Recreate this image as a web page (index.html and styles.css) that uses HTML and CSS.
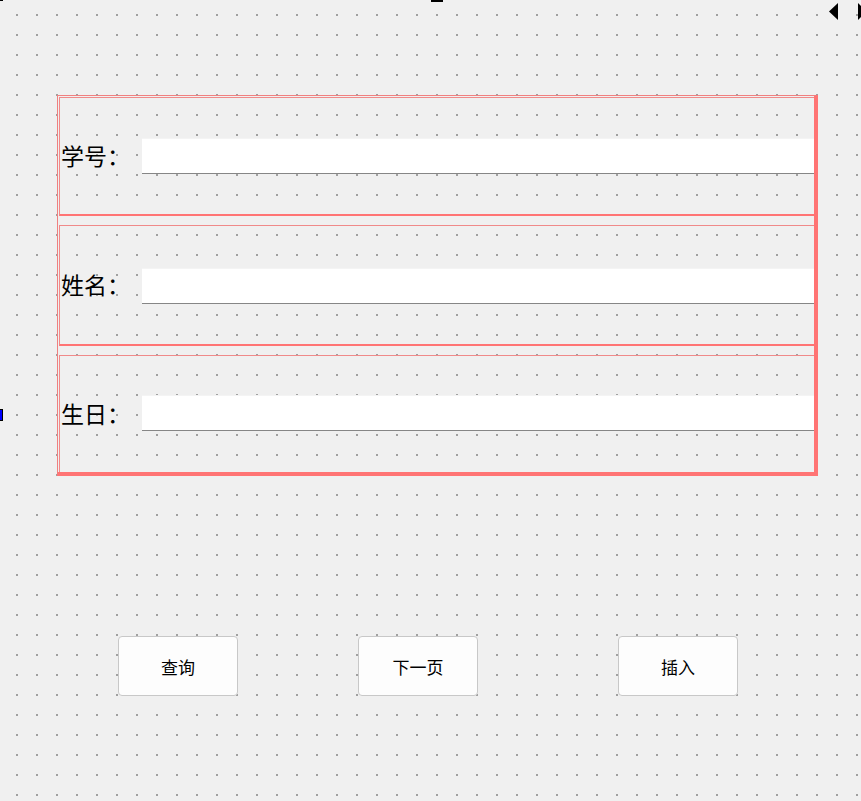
FILE: index.html
```html
<!DOCTYPE html>
<html lang="zh-CN">
<head>
  <meta charset="UTF-8">
  <title>学生信息</title>
  <link rel="stylesheet" href="styles.css">
</head>
<body>
  <div class="handle handle-tl"></div>
  <div class="handle handle-top"></div>
  <div class="handle handle-left"></div>
  <svg class="handle-arrows" width="33" height="22" viewBox="0 0 33 22">
    <polygon points="10,3 10,20 1,11.5" fill="#000"/>
    <polygon points="30,3 30,20 33,17 33,6" fill="#000"/>
  </svg>

  <form class="form-layout">
    <div class="field-row">
      <label class="field-label">学号：</label>
      <input class="field-input" name="sno">
    </div>
    <div class="field-row row-mid">
      <label class="field-label">姓名：</label>
      <input class="field-input" name="sname">
    </div>
    <div class="field-row row-last">
      <label class="field-label">生日：</label>
      <input class="field-input" name="birthday">
    </div>
  </form>

  <div class="button-row">
    <button type="button" class="btn">查询</button>
    <button type="button" class="btn btn-next">下一页</button>
    <button type="button" class="btn btn-insert">插入</button>
  </div>
</body>
</html>
```

FILE: styles.css
```css
html, body { margin: 0; padding: 0; }
body {
  width: 861px;
  height: 801px;
  overflow: hidden;
  position: relative;
  background-color: #f0f0f0;
  background-image: conic-gradient(from 0deg at 2px 2px, transparent 75%, #a0a0a0 0);
  background-size: 20px 20px;
  background-position: 16px 14px;
  font-family: "Noto Sans CJK SC", "Noto Sans", sans-serif;
}

/* designer handles */
.handle { position: absolute; background: #000; }
.handle-tl { left: 0; top: 0; width: 3px; height: 1px; }
.handle-top { left: 431px; top: 0; width: 12px; height: 2px; }
.handle-left {
  left: 0; top: 409px; width: 2px; height: 10px;
  background: #0000ff;
  border: 1px solid #000;
  border-left: none;
}
.handle-arrows { position: absolute; top: 0; left: 828px; }

/* form layout */
.form-layout {
  margin: 95px 0 0 57px;
  width: 761px;
  box-sizing: border-box;
  border-left: 1px solid #f08080;
  border-top: 1px solid #f08080;
  border-right: 4px solid #ff7474;
  border-bottom: 4px solid #ff7474;
  padding: 1px 0 0 1px;
}
.field-row {
  display: flex;
  align-items: center;
  height: 116px;
  border-left: 1px solid #f08a8a;
  border-top: 1px solid #f08a8a;
  border-bottom: 2px solid #ff7474;
  padding-left: 1px;
}
.row-mid { margin-top: 9px; height: 118px; }
.row-last { margin-top: 9px; height: 116px; border-bottom: none; }

.field-label {
  width: 81px;
  font-size: 23px;
  color: #000;
  line-height: 1;
  margin-top: -2px;
}
.field-input {
  flex: 1;
  height: 36px;
  box-sizing: border-box;
  margin: 0;
  padding: 0 4px;
  border: none;
  border-top: 1px solid #f4f4f4;
  border-bottom: 1px solid #868686;
  background: #fff;
  outline: none;
}
.row-mid .field-input { margin-top: 1px; }
.row-last .field-input { margin-top: -3px; }

/* buttons */
.button-row {
  display: flex;
  margin-top: 160px;
  padding-left: 118px;
}
.btn {
  width: 120px;
  height: 60px;
  border: 1px solid #c8c8c8;
  border-radius: 4px;
  background: #fdfdfd;
  font-family: "Noto Sans CJK SC", sans-serif;
  font-size: 17px;
  color: #000;
  cursor: pointer;
}
.btn-next { margin-left: 120px; }
.btn-insert { margin-left: 140px; }
```
